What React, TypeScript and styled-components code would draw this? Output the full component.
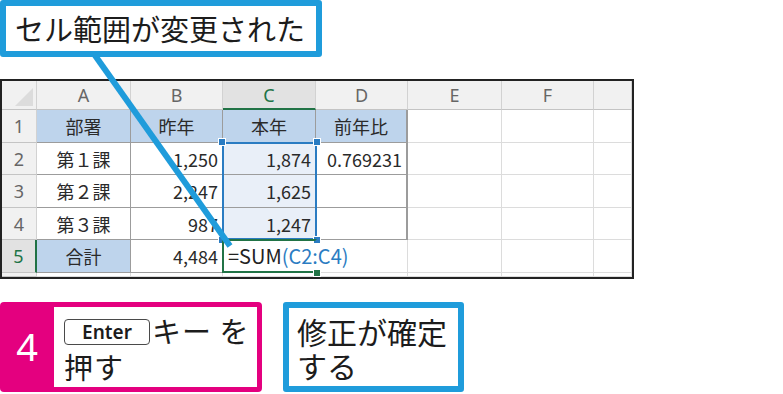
import React from "react";
import styled, { createGlobalStyle, css } from "styled-components";

const BLUE = "#1f9cdb";
const PINK = "#e4007f";
const RANGE = "#2b7cc2";
const GREEN = "#217346";

const Global = createGlobalStyle`
  html, body { margin: 0; padding: 0; background: #fff; }
  body { font-family: "Noto Sans CJK JP", "Noto Sans", sans-serif; color: #1c1c1c; }
`;

const Page = styled.div`
  position: relative;
  width: 783px;
  height: 394px;
  overflow: hidden;
  display: flex;
  flex-direction: column;
`;

const Callout = styled.div`
  box-sizing: border-box;
  width: 322px;
  height: 57px;
  border: 6px solid ${BLUE};
  border-radius: 3px;
  display: flex;
  align-items: center;
  padding-left: 9px;
  font-size: 29px;
  line-height: 1;
  color: #1c1c1c;
`;

const Sheet = styled.div`
  box-sizing: border-box;
  margin-top: 22px;
  width: 634px;
  height: 200px;
  border: 2px solid #222;
  overflow: hidden;
  display: grid;
  grid-template-columns: 35px 94px 92px 93px 92px 94px 92px 1fr;
  grid-template-rows: 29px 33px 32px 33px 32px 33px 1fr;
  font-size: 18px;
`;

type Kind = "head" | "corner" | "plain" | "table";

const Cell = styled.div<{
  $r: number;
  $c: number;
  $kind: Kind;
  $align?: "left" | "center" | "right";
  $fill?: string;
  $active?: "col" | "row";
  $edge?: boolean;
  $noRight?: boolean;
}>`
  grid-row: ${(p) => p.$r};
  grid-column: ${(p) => p.$c};
  box-sizing: border-box;
  min-width: 0;
  display: flex;
  align-items: center;
  white-space: nowrap;
  padding: 0 4px;
  line-height: 1;
  justify-content: ${(p) =>
    p.$align === "left" ? "flex-start" : p.$align === "right" ? "flex-end" : "center"};
  border-right: 1px solid #dcdcdc;
  border-bottom: 1px solid #dcdcdc;
  background: ${(p) => p.$fill ?? "transparent"};
  color: #2a2a2a;

  ${(p) =>
    (p.$kind === "head" || p.$kind === "corner") &&
    css`
      background: #f1f1f1;
      color: #666;
      border-right-color: #d2d2d2;
      border-bottom-color: #c4c4c4;
      font-family: "Noto Sans", "Noto Sans CJK JP", sans-serif;
    `}
  ${(p) =>
    p.$kind === "corner" &&
    css`
      position: relative;
      &::after {
        content: "";
        position: absolute;
        right: 3px;
        bottom: 3px;
        border-style: solid;
        border-width: 0 0 18px 18px;
        border-color: transparent transparent #dcdcdc transparent;
      }
    `}
  ${(p) =>
    p.$kind === "table" &&
    css`
      border-right-color: #9c9c9c;
      border-bottom-color: #9c9c9c;
    `}
  ${(p) =>
    p.$edge &&
    css`
      border-right: 2px solid #9c9c9c;
    `}
  ${(p) =>
    p.$noRight &&
    css`
      border-right-color: transparent;
    `}
  ${(p) =>
    p.$active === "col" &&
    css`
      background: #e2e2e2;
      color: ${GREEN};
      border-bottom: 2px solid ${GREEN};
    `}
  ${(p) =>
    p.$active === "row" &&
    css`
      background: #e2e2e2;
      color: ${GREEN};
      border-right: 2px solid ${GREEN};
    `}
`;

const Formula = styled.span`
  color: #222;
  position: relative;
  z-index: 4;
  font-size: 20px;
  margin-left: 1px;
`;

const Ref = styled.span`
  color: ${RANGE};
`;

const RangeBox = styled.div<{ $color: string; $col: number; $rows: string; $open?: boolean }>`
  grid-column: ${(p) => p.$col};
  grid-row: ${(p) => p.$rows};
  position: relative;
  margin: -1px -1px 0 -1px;
  border: 2px solid ${(p) => p.$color};
  ${(p) => p.$open && "border-right-color: transparent;"}
  pointer-events: none;
  z-index: 3;
`;

const Handle = styled.span<{ $color: string; $x: "l" | "r"; $y: "t" | "b" }>`
  position: absolute;
  width: 6px;
  height: 6px;
  background: ${(p) => p.$color};
  border: 1px solid #fff;
  ${(p) => (p.$x === "l" ? "left: -6px;" : "right: -6px;")}
  ${(p) => (p.$y === "t" ? "top: -6px;" : "bottom: -6px;")}
`;

const Footer = styled.div`
  margin-top: 23px;
  display: flex;
  gap: 21px;
`;

const StepBox = styled.div`
  box-sizing: border-box;
  width: 262px;
  height: 90px;
  background: ${PINK};
  border-radius: 4px;
  padding: 5px 5px 5px 0;
  display: flex;
`;

const StepNum = styled.div`
  width: 54px;
  display: flex;
  align-items: center;
  justify-content: center;
  color: #fff;
  font-family: "Noto Sans", sans-serif;
  font-size: 38px;
  padding-bottom: 2px;
`;

const StepBody = styled.div`
  flex: 1;
  background: #fff;
  padding: 5px 0 0 10px;
  font-size: 29px;
  line-height: 36px;
  color: #1c1c1c;
  white-space: nowrap;
  overflow: hidden;
`;

const Key = styled.span`
  box-sizing: border-box;
  display: inline-flex;
  align-items: center;
  justify-content: center;
  width: 86px;
  height: 26px;
  border: 1px solid #4a4a4a;
  border-radius: 4px;
  font-family: "Noto Sans", sans-serif;
  font-size: 19px;
  font-weight: 600;
  line-height: 1;
  vertical-align: middle;
  position: relative;
  top: -3px;
  margin-right: 2px;
`;

const Spaced = styled.span`
  letter-spacing: 1px;
`;

const ResultBox = styled.div`
  box-sizing: border-box;
  width: 181px;
  height: 90px;
  border: 6px solid ${BLUE};
  border-radius: 3px;
  padding: 6px 0 0 8px;
  font-size: 30px;
  line-height: 34px;
  color: #1c1c1c;
  white-space: nowrap;
`;

const Pointer = styled.svg`
  position: absolute;
  left: 0;
  top: 0;
  pointer-events: none;
  z-index: 10;
`;

const COLS = ["A", "B", "C", "D", "E", "F", ""];
const LIGHT = "#bed4ec";
const TINT = "#e9eff8";

type Row = { a: string; b: string; c: React.ReactNode; d: string; fillA?: boolean; head?: boolean };

const ROWS: Row[] = [
  { a: "部署", b: "昨年", c: "本年", d: "前年比", head: true },
  { a: "第１課", b: "1,250", c: "1,874", d: "0.769231" },
  { a: "第２課", b: "2,247", c: "1,625", d: "" },
  { a: "第３課", b: "987", c: "1,247", d: "" },
  {
    a: "合計",
    b: "4,484",
    c: (
      <Formula>
        =SUM<Ref>(C2:C4)</Ref>
      </Formula>
    ),
    d: "",
    fillA: true,
  },
];

export default function App() {
  return (
    <Page>
      <Global />
      <Callout>セル範囲が変更された</Callout>

      <Sheet>
        <Cell $r={1} $c={1} $kind="corner" />
        {COLS.map((c, i) => (
          <Cell key={i} $r={1} $c={i + 2} $kind="head" $active={c === "C" ? "col" : undefined}>
            {c}
          </Cell>
        ))}

        {ROWS.map((r, i) => {
          const n = i + 1;
          const gr = n + 1;
          const last = n === 5;
          return (
            <React.Fragment key={n}>
              <Cell $r={gr} $c={1} $kind="head" $active={last ? "row" : undefined}>
                {n}
              </Cell>
              <Cell $r={gr} $c={2} $kind="table" $fill={r.head || r.fillA ? LIGHT : undefined}>
                {r.a}
              </Cell>
              <Cell
                $r={gr}
                $c={3}
                $kind="table"
                $align={r.head ? "center" : "right"}
                $fill={r.head ? LIGHT : undefined}
              >
                {r.b}
              </Cell>
              <Cell
                $r={gr}
                $c={4}
                $kind={last ? "plain" : "table"}
                $align={r.head ? "center" : last ? "left" : "right"}
                $fill={r.head ? LIGHT : last ? undefined : TINT}
                $noRight={last}
              >
                {r.c}
              </Cell>
              <Cell
                $r={gr}
                $c={5}
                $kind={last ? "plain" : "table"}
                $align={r.head ? "center" : "right"}
                $fill={r.head ? LIGHT : undefined}
                $edge={!last}
              >
                {r.d}
              </Cell>
              <Cell $r={gr} $c={6} $kind="plain" />
              <Cell $r={gr} $c={7} $kind="plain" />
              <Cell $r={gr} $c={8} $kind="plain" />
            </React.Fragment>
          );
        })}

        {COLS.concat([""]).map((_, i) => (
          <Cell key={`tail-${i}`} $r={7} $c={i + 1} $kind={i === 0 ? "head" : "plain"} />
        ))}

        <RangeBox $color={RANGE} $col={4} $rows="3 / 6">
          <Handle $color={RANGE} $x="l" $y="t" />
          <Handle $color={RANGE} $x="r" $y="t" />
          <Handle $color={RANGE} $x="l" $y="b" />
          <Handle $color={RANGE} $x="r" $y="b" />
        </RangeBox>
        <RangeBox $color={GREEN} $col={4} $rows="6 / 7" $open>
          <Handle $color={GREEN} $x="r" $y="b" />
        </RangeBox>
      </Sheet>

      <Footer>
        <StepBox>
          <StepNum>4</StepNum>
          <StepBody>
            <Key>Enter</Key>
            <Spaced>キー を</Spaced>
            <br />
            <Spaced>押す</Spaced>
          </StepBody>
        </StepBox>
        <ResultBox>
          修正が確定
          <br />
          する
        </ResultBox>
      </Footer>

      <Pointer width="783" height="394" viewBox="0 0 783 394">
        <line x1="94" y1="54" x2="230" y2="246" stroke={BLUE} strokeWidth="6" />
      </Pointer>
    </Page>
  );
}
